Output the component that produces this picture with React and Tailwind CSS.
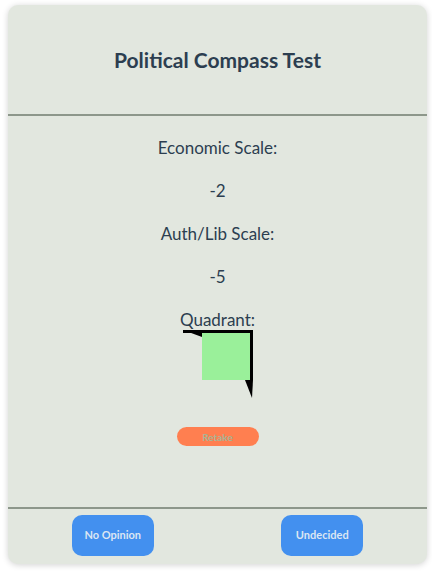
export default function App() {
  return (
    <div className="w-[432px] h-[573px] bg-white pl-[8px] pr-[5px] pt-[5px] pb-[9px]" style={{ fontFamily: "Lato, 'Open Sans', sans-serif" }}>
      <div className="h-full flex flex-col rounded-[10px] bg-[#e2e7df] shadow-[0_1px_6px_rgba(0,0,0,0.18)] text-[#2c3e50]">
        <div className="h-[111px] flex items-center justify-center border-b-2 border-[#8d978b]">
          <h1 className="text-[21px] font-bold leading-none">Political Compass Test</h1>
        </div>
        <div className="flex-1 flex flex-col items-center pt-[19px]">
          <p className="text-[17px] leading-[25px] mb-[18px]">Economic Scale:</p>
          <p className="text-[17px] leading-[25px] mb-[18px]">-2</p>
          <p className="text-[17px] leading-[25px] mb-[18px]">Auth/Lib Scale:</p>
          <p className="text-[17px] leading-[25px] mb-[18px]">-5</p>
          <p className="text-[17px] leading-[25px]">Quadrant:</p>
          <svg width="70" height="68" viewBox="0 0 70 68" className="mt-[-2px] ml-[1px]">
            <rect x="0" y="0" width="70" height="3" fill="#000" />
            <rect x="67" y="0" width="3" height="50" fill="#000" />
            <polygon points="0,0 19,0 19,7" fill="#000" />
            <polygon points="62,50 70,50 69,68" fill="#000" />
            <rect x="19" y="3" width="48" height="47" fill="#9af09a" />
          </svg>
          <button className="mt-[29px] w-[82px] h-[19px] rounded-full bg-[#ff7f50] text-[10px] font-bold text-[#a8b596] leading-none">Retake</button>
        </div>
        <div className="border-t-2 border-[#8d978b] grid grid-cols-2 pt-[6px] pb-[8px]">
          <div className="flex justify-center">
            <button className="w-[82px] h-[41px] rounded-[10px] bg-[#4390ef] text-[11px] font-bold text-[#dbe6f3]">No Opinion</button>
          </div>
          <div className="flex justify-center">
            <button className="w-[82px] h-[41px] rounded-[10px] bg-[#4390ef] text-[11px] font-bold text-[#dbe6f3]">Undecided</button>
          </div>
        </div>
      </div>
    </div>
  );
}
